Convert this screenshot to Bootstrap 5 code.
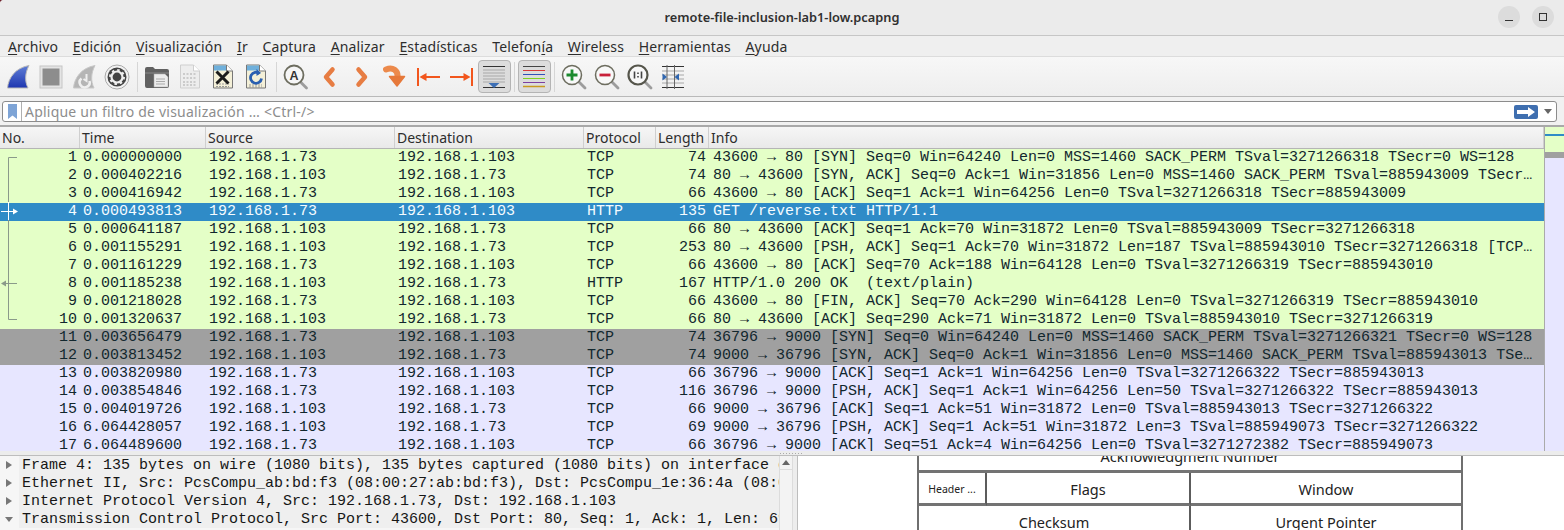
<!DOCTYPE html>
<html lang="es">
<head>
    <meta charset="UTF-8">
    <meta name="viewport" content="width=device-width, initial-scale=1.0">
    <title>remote-file-inclusion-lab1-low.pcapng</title>
    <link href="https://cdn.jsdelivr.net/npm/bootstrap@5.3.0/dist/css/bootstrap.min.css" rel="stylesheet">
    <style>
        html, body { height: 530px; overflow: hidden; }
        body { background: #6e1f2a; font-family: "Noto Sans", sans-serif; font-size: 14px; line-height: 18px; color: #2f2f2f; }
        .app-shell { height: 530px; background: #f0f0f0; border-top-left-radius: 4px; }

        .title-strip { height: 36px; background: #ebebeb; border-bottom: 1px solid #c6c6c6; }
        .title-text { font-weight: 600; font-size: 12.8px; color: #303030; margin-bottom: 1px; }
        .win-btn { width: 22px; height: 22px; border-radius: 50%; background: #dcdcdc; }
        .win-btns { right: 10px; top: 6px; gap: 12px; }

        .menu-strip { height: 21px; gap: 14.7px; padding-left: 8px; padding-top: 2px; background: #efefef; border-bottom: 1px solid #dcdcdc; font-size: 14px; letter-spacing: .15px; color: #2d2d2d; }
        .menu-strip u { text-underline-offset: 2px; }

        .tool-strip { height: 40px; background: linear-gradient(#f7f7f7, #eeeeee); border-bottom: 1px solid #b9b9b9; padding-left: 1.5px; }
        .tool-btn { width: 33px; height: 33px; }
        .tool-btn.pressed { background: #dcdcdc; border: 1px solid #b4b4b4; border-radius: 4px; }
        .tool-sep { width: 7px; height: 30px; }
        .tool-sep::after { content: ""; display: block; width: 1px; height: 100%; margin: 0 auto; background: #d6d6d6; }

        .filter-strip { height: 30px; background: #f1f1f1; border-bottom: 2px solid #a9a9a9; padding: 4px 7px 3px 2px; }
        .filter-box { height: 21px; background: #fff; border: 1px solid #8c8c8c; border-radius: 3px; }
        .filter-mark { width: 19px; border-right: 1px solid #b0b0b0; }
        .filter-hint { color: #8d8d8d; font-size: 14px; letter-spacing: .22px; padding-left: 3px; }
        .filter-go { width: 24px; height: 14px; background: #3f6fb0; border-radius: 2px; margin-right: 6px; }
        .filter-caret { width: 0; height: 0; border: 4px solid transparent; border-top: 5px solid #666; border-bottom: 0; margin-right: 4px; }

        .packet-zone { height: 324px; }
        .packet-list { width: 1544px; }
        .pkt-table { width: 1544px; table-layout: fixed; border-collapse: collapse; }
        .pkt-table th { height: 21px; padding: 1px 2px 0; font-weight: 400; font-size: 14px; color: #2d2d2d; background: linear-gradient(#f6f6f6, #e9e9e9); box-shadow: inset -1px 0 #cfcfcf; border-bottom: 1px solid #b5b5b5; }
        .pkt-table td { height: 18px; padding: 0 3px; font-family: "Liberation Mono", monospace; font-size: 15px; line-height: 18px; white-space: pre; overflow: hidden; color: #12272e; }
        .pkt-table td.info-cell { padding-left: 4px; }
        .pkt-green td { background: #e4ffc7; }
        .pkt-gray td { background: #a0a0a0; }
        .pkt-blue td { background: #e7e6ff; }
        .pkt-sel td { background: #2f8bc7; color: #f4fbff; }
        .rel-marks { left: 0; top: 21px; }

        .map-strip { width: 20px; border-left: 1px solid #aaa; }
        .map-green { background: #e4ffc7; }
        .map-sel { height: 2px; background: #2f8bc7; }
        .map-gray { height: 6px; background: #a0a0a0; }
        .map-lav { background: #e7e6ff; }

        .split-grip { height: 5px; background: #ececec; border-bottom: 1px solid #bdbdbd; }
        .split-grip span { width: 1px; height: 1px; background: #aaa; }
        .split-dots { gap: 2px; padding-top: 2px; margin-left: 18px; }

        .lower-zone { height: 74px; }
        .tree-pane { width: 779px; background: #f6f6f6; }
        .tree-row { height: 18px; }
        .tree-arrow { width: 19px; }
        .tree-text { width: 760px; background: #efefef; font-family: "Liberation Mono", monospace; font-size: 15px; line-height: 18px; padding: 1px 0 0 3px; white-space: pre; overflow: hidden; color: #161616; }
        .arrow-right { width: 0; height: 0; border: 4px solid transparent; border-left: 6px solid #777; border-right: 0; margin-left: 6px; }
        .arrow-down { width: 0; height: 0; border: 4px solid transparent; border-top: 5px solid #777; border-bottom: 0; margin-left: 5px; }
        .tree-scroll { width: 14px; background: #f3f3f3; border-left: 1px solid #dcdcdc; border-right: 1px solid #dcdcdc; }
        .tree-scroll-btn { height: 14px; border-bottom: 1px solid #dcdcdc; }
        .arrow-up { width: 0; height: 0; border: 4px solid transparent; border-bottom: 5px solid #666; border-top: 0; }
        .pane-gap { width: 5px; background: #ededed; border-right: 1px solid #bdbdbd; }

        .diagram-pane { width: 766px; background: #fff; padding-left: 119px; }
        .tcp-grid { display: grid; grid-template-columns: 68px 204px 270px; grid-auto-rows: 33px; width: 546px; margin-top: -16px; border-left: 2px solid #6f6f6f; border-right: 2px solid #6f6f6f; color: #222; font-size: 14.5px; }
        .tcp-cell { border-bottom: 3px solid #737373; border-right: 2px solid #5c5c5c; padding-top: 2px; }
        .tcp-cell.last-cell { border-right: 0; }
        .tcp-span4 { grid-column: span 3; }
        .tcp-span2 { grid-column: span 2; }
        .tcp-tiny { font-size: 10.5px; }
    </style>
</head>
<body>
<div class="app-shell d-flex flex-column overflow-hidden">

    <!-- title bar -->
    <div class="title-strip position-relative d-flex align-items-center justify-content-center">
        <span class="title-text">remote-file-inclusion-lab1-low.pcapng</span>
        <div class="win-btns position-absolute d-flex">
            <div class="win-btn d-flex align-items-center justify-content-center">
                <svg width="10" height="10" viewBox="0 0 10 10"><rect x="1" y="8" width="8" height="1" fill="#333"/></svg>
            </div>
            <div class="win-btn d-flex align-items-center justify-content-center">
                <svg width="10" height="10" viewBox="0 0 10 10"><rect x="1.5" y="1.5" width="7" height="7" fill="none" stroke="#333"/></svg>
            </div>
        </div>
    </div>

    <!-- menu -->
    <nav class="menu-strip d-flex align-items-center">
        <span><u>A</u>rchivo</span>
        <span><u>E</u>dición</span>
        <span><u>V</u>isualización</span>
        <span><u>I</u>r</span>
        <span><u>C</u>aptura</span>
        <span><u>A</u>nalizar</span>
        <span><u>E</u>stadísticas</span>
        <span>Telefon<u>í</u>a</span>
        <span><u>W</u>ireless</span>
        <span><u>H</u>erramientas</span>
        <span><u>A</u>yuda</span>
    </nav>

    <!-- main toolbar -->
    <div class="tool-strip d-flex align-items-center">
        <div class="tool-btn d-flex align-items-center justify-content-center">
            <svg width="26" height="26" viewBox="0 0 26 26"><defs><linearGradient id="finBlue" x1="0" y1="0" x2="0" y2="1"><stop offset="0" stop-color="#5f7ed6"/><stop offset="1" stop-color="#1e36b0"/></linearGradient></defs><path d="M2.500 24C3.500 14 10 4 24 1.500C20 9 19.500 17 23 24Z" fill="url(#finBlue)" stroke="#b9b9b9"/></svg>
        </div>
        <div class="tool-btn d-flex align-items-center justify-content-center">
            <svg width="24" height="24" viewBox="0 0 24 24"><rect x="1" y="1" width="22" height="22" fill="#e4e4e4" stroke="#c6c6c6"/><rect x="3.500" y="3.500" width="17" height="17" fill="#8d8d8d"/></svg>
        </div>
        <div class="tool-btn d-flex align-items-center justify-content-center">
            <svg width="26" height="26" viewBox="0 0 26 26"><path d="M2.500 24C3.500 14 10 4 24 1.500C20 9 19.500 17 23 24Z" fill="#b5b5b5" stroke="#c8c8c8"/><path d="M10.500 14.500a5 5 0 1 0 8 2.500" fill="none" stroke="#efefef" stroke-width="2.500"/><path d="M15.500 10v7l-3-2" fill="none" stroke="#efefef" stroke-width="2"/></svg>
        </div>
        <div class="tool-btn d-flex align-items-center justify-content-center">
            <svg width="26" height="26" viewBox="0 0 26 26"><circle cx="13" cy="13" r="12" fill="#f2f2f2" stroke="#a9a9a9"/><circle cx="13" cy="13" r="9.500" fill="#444"/><circle cx="13" cy="13" r="5.500" fill="none" stroke="#eee" stroke-width="2.200" /><circle cx="13" cy="13" r="7" fill="none" stroke="#eee" stroke-width="2" stroke-dasharray="2.500 3"/></svg>
        </div>
        <div class="tool-sep"></div>
        <div class="tool-btn d-flex align-items-center justify-content-center">
            <svg width="26" height="24" viewBox="0 0 26 24"><path d="M1 4q0-2 2-2h6l2 2h12q2 0 2 2v15q0 2-2 2H3q-2 0-2-2Z" fill="#616161"/><path d="M1 8h24" stroke="#8a8a8a"/><path d="M10 9h11l3 3v10H10Z" fill="#ececec" stroke="#aaa" stroke-width=".5"/><path d="M12 14h9M12 16.500h9M12 19h9" stroke="#aaa"/></svg>
        </div>
        <div class="tool-btn d-flex align-items-center justify-content-center">
            <svg width="22" height="25" viewBox="0 0 22 25"><path d="M1.500 1h13l6 6v17h-19Z" fill="#ededed" stroke="#cfcfcf"/><path d="M14.500 1v6h6" fill="#fff" stroke="#cfcfcf"/><path d="M4 10h13M4 14h13M4 18h13M4 21h13" stroke="#c0c0c0" stroke-width="1.500" stroke-dasharray="2 1.500"/></svg>
        </div>
        <div class="tool-btn d-flex align-items-center justify-content-center">
            <svg width="22" height="25" viewBox="0 0 22 25"><path d="M1.500 1h13l6 6v17h-19Z" fill="#f4f0d8" stroke="#777"/><path d="M2 1.500h12l1 5H2Z" fill="#6fb0dc"/><path d="M14.500 1v6h6" fill="#fff" stroke="#777"/><path d="M4 20h13M4 22.500h13" stroke="#999" stroke-dasharray="2 1"/><path d="M4.500 7.500l12 12M16.500 7.500l-12 12" stroke="#1c1c1c" stroke-width="3"/></svg>
        </div>
        <div class="tool-btn d-flex align-items-center justify-content-center">
            <svg width="22" height="25" viewBox="0 0 22 25"><path d="M1.500 1h13l6 6v17h-19Z" fill="#f4f0d8" stroke="#777"/><path d="M2 1.500h12l1 5H2Z" fill="#6fb0dc"/><path d="M14.500 1v6h6" fill="#fff" stroke="#777"/><path d="M4 21h13M4 23h13" stroke="#999" stroke-dasharray="2 1"/><path d="M14.500 9.500a5.500 5.500 0 1 0 2 5" fill="none" stroke="#2a5fb0" stroke-width="2.800"/><path d="M11.500 5l4.500 4-4.500 3Z" fill="#2a5fb0"/></svg>
        </div>
        <div class="tool-sep"></div>
        <div class="tool-btn d-flex align-items-center justify-content-center">
            <svg width="26" height="26" viewBox="0 0 26 26"><path d="M16.500 17l7 7" stroke="#9c9c9c" stroke-width="2.800" stroke-linecap="round"/><circle cx="11" cy="11" r="9.500" fill="#f6f6f6" stroke="#6d6d5f" stroke-width="1.800"/><text x="11" y="15.500" text-anchor="middle" font-family="Liberation Sans, sans-serif" font-weight="700" font-size="12.500" fill="#333">A</text></svg>
        </div>
        <div class="tool-btn d-flex align-items-center justify-content-center">
            <svg width="16" height="22" viewBox="0 0 16 22"><path d="M11.500 3.500L5 11l6.500 7.500" fill="none" stroke="#e77d43" stroke-width="4.500" stroke-linecap="round" stroke-linejoin="round"/></svg>
        </div>
        <div class="tool-btn d-flex align-items-center justify-content-center">
            <svg width="16" height="22" viewBox="0 0 16 22"><path d="M4.500 3.500L11 11l-6.500 7.500" fill="none" stroke="#e77d43" stroke-width="4.500" stroke-linecap="round" stroke-linejoin="round"/></svg>
        </div>
        <div class="tool-btn d-flex align-items-center justify-content-center">
            <svg width="24" height="24" viewBox="0 0 24 24"><path d="M3 4.500C9.500 2 15.500 5 14.500 13" fill="none" stroke="#ec8a4c" stroke-width="6" stroke-linecap="round"/><path d="M6.500 11.500h15l-7.500 9.500Z" fill="#e6793a" stroke="#e6793a" stroke-width="1.500" stroke-linejoin="round"/></svg>
        </div>
        <div class="tool-btn d-flex align-items-center justify-content-center">
            <svg width="25" height="20" viewBox="0 0 25 20"><path d="M2 1v18" stroke="#f2561d" stroke-width="2"/><path d="M7 10h17" stroke="#f2561d" stroke-width="2"/><path d="M3.500 10l7-4v8Z" fill="#f2561d"/></svg>
        </div>
        <div class="tool-btn d-flex align-items-center justify-content-center">
            <svg width="25" height="20" viewBox="0 0 25 20"><path d="M23 1v18" stroke="#f2561d" stroke-width="2"/><path d="M1 10h17" stroke="#f2561d" stroke-width="2"/><path d="M21.500 10l-7-4v8Z" fill="#f2561d"/></svg>
        </div>
        <div class="tool-btn pressed d-flex align-items-center justify-content-center">
            <svg width="24" height="24" viewBox="0 0 24 24"><path d="M1 1.500h22M1 22.500h22" stroke="#333"/><path d="M1 5h22M1 8h22M1 11h22M1 14h22M1 17h22" stroke="#a8a8a8"/><path d="M6.500 18h11l-5.500 5Z" fill="#3d6fb5"/></svg>
        </div>
        <div class="tool-sep"></div>
        <div class="tool-btn pressed d-flex align-items-center justify-content-center">
            <svg width="24" height="24" viewBox="0 0 24 24"><path d="M1 1.500h22" stroke="#444"/><path d="M1 5.500h22" stroke="#d83a3a"/><path d="M1 9.500h22" stroke="#3250b8"/><path d="M1 13.500h22" stroke="#7fd020"/><path d="M1 17.500h22" stroke="#7b3fa0"/><path d="M1 21.500h22" stroke="#c99a1e" stroke-width="1.500"/></svg>
        </div>
        <div class="tool-sep"></div>
        <div class="tool-btn d-flex align-items-center justify-content-center">
            <svg width="26" height="26" viewBox="0 0 26 26"><path d="M17 17l7 7" stroke="#9c9c9c" stroke-width="2.800" stroke-linecap="round"/><circle cx="11" cy="11" r="9.500" fill="#f8f8f8" stroke="#6d6d5f" stroke-width="1.500"/><path d="M11 5.500v11M5.500 11h11" stroke="#1b8a2e" stroke-width="2.800"/></svg>
        </div>
        <div class="tool-btn d-flex align-items-center justify-content-center">
            <svg width="26" height="26" viewBox="0 0 26 26"><path d="M17 17l7 7" stroke="#9c9c9c" stroke-width="2.800" stroke-linecap="round"/><circle cx="11" cy="11" r="9.500" fill="#f8f8f8" stroke="#6d6d5f" stroke-width="1.500"/><path d="M5.500 11h11" stroke="#c8213a" stroke-width="2.800"/></svg>
        </div>
        <div class="tool-btn d-flex align-items-center justify-content-center">
            <svg width="26" height="26" viewBox="0 0 26 26"><path d="M17.500 17.500l6.500 6.500" stroke="#9c9c9c" stroke-width="2.800" stroke-linecap="round"/><circle cx="11" cy="11" r="9.500" fill="#f8f8f8" stroke="#55554b" stroke-width="2.200"/><path d="M7.500 7.500v7M14.500 7.500v7M11 8.500v1.500M11 12v1.500" stroke="#444" stroke-width="1.600"/></svg>
        </div>
        <div class="tool-btn d-flex align-items-center justify-content-center">
            <svg width="24" height="24" viewBox="0 0 24 24"><path d="M1 1.500h22M1 22.500h22" stroke="#333"/><path d="M1 6h22M1 10h22M1 14h22M1 18h22" stroke="#a8a8a8"/><path d="M6 0v24M13.500 0v24" stroke="#666"/><path d="M1.500 8.500L6 12l-4.500 3.500Z" fill="#2f66b0"/><path d="M18 8.500L13.500 12l4.500 3.500Z" fill="#2f66b0"/></svg>
        </div>
    </div>

    <!-- display filter -->
    <div class="filter-strip">
        <div class="filter-box d-flex align-items-center">
            <div class="filter-mark d-flex align-items-center justify-content-center h-100">
                <svg width="9" height="15" viewBox="0 0 9 15"><path d="M0 0h9v15l-4.500-3.500L0 15Z" fill="#7ea4d6"/></svg>
            </div>
            <div class="filter-hint flex-grow-1 text-nowrap">Aplique un filtro de visualización … &lt;Ctrl-/&gt;</div>
            <div class="filter-go d-flex align-items-center justify-content-center">
                <svg width="18" height="10" viewBox="0 0 18 10"><path d="M0 3h11V0l7 5-7 5V7H0Z" fill="#fff"/></svg>
            </div>
            <div class="filter-caret"></div>
        </div>
    </div>

    <!-- packet list -->
    <div class="packet-zone d-flex position-relative overflow-hidden">
        <div class="packet-list overflow-hidden position-relative">
            <table class="pkt-table">
                <colgroup><col style="width:80px"><col style="width:126px"><col style="width:189px"><col style="width:189px"><col style="width:72px"><col style="width:53px"><col></colgroup>
                <thead>
                    <tr><th>No.</th><th>Time</th><th>Source</th><th>Destination</th><th>Protocol</th><th>Length</th><th>Info</th></tr>
                </thead>
                <tbody>
                    <tr class="pkt-green"><td class="text-end">1</td><td>0.000000000</td><td>192.168.1.73</td><td>192.168.1.103</td><td>TCP</td><td class="text-end">74</td><td class="info-cell">43600 → 80 [SYN] Seq=0 Win=64240 Len=0 MSS=1460 SACK_PERM TSval=3271266318 TSecr=0 WS=128</td></tr>
                    <tr class="pkt-green"><td class="text-end">2</td><td>0.000402216</td><td>192.168.1.103</td><td>192.168.1.73</td><td>TCP</td><td class="text-end">74</td><td class="info-cell">80 → 43600 [SYN, ACK] Seq=0 Ack=1 Win=31856 Len=0 MSS=1460 SACK_PERM TSval=885943009 TSecr…</td></tr>
                    <tr class="pkt-green"><td class="text-end">3</td><td>0.000416942</td><td>192.168.1.73</td><td>192.168.1.103</td><td>TCP</td><td class="text-end">66</td><td class="info-cell">43600 → 80 [ACK] Seq=1 Ack=1 Win=64256 Len=0 TSval=3271266318 TSecr=885943009</td></tr>
                    <tr class="pkt-sel"><td class="text-end">4</td><td>0.000493813</td><td>192.168.1.73</td><td>192.168.1.103</td><td>HTTP</td><td class="text-end">135</td><td class="info-cell">GET /reverse.txt HTTP/1.1</td></tr>
                    <tr class="pkt-green"><td class="text-end">5</td><td>0.000641187</td><td>192.168.1.103</td><td>192.168.1.73</td><td>TCP</td><td class="text-end">66</td><td class="info-cell">80 → 43600 [ACK] Seq=1 Ack=70 Win=31872 Len=0 TSval=885943009 TSecr=3271266318</td></tr>
                    <tr class="pkt-green"><td class="text-end">6</td><td>0.001155291</td><td>192.168.1.103</td><td>192.168.1.73</td><td>TCP</td><td class="text-end">253</td><td class="info-cell">80 → 43600 [PSH, ACK] Seq=1 Ack=70 Win=31872 Len=187 TSval=885943010 TSecr=3271266318 [TCP…</td></tr>
                    <tr class="pkt-green"><td class="text-end">7</td><td>0.001161229</td><td>192.168.1.73</td><td>192.168.1.103</td><td>TCP</td><td class="text-end">66</td><td class="info-cell">43600 → 80 [ACK] Seq=70 Ack=188 Win=64128 Len=0 TSval=3271266319 TSecr=885943010</td></tr>
                    <tr class="pkt-green"><td class="text-end">8</td><td>0.001185238</td><td>192.168.1.103</td><td>192.168.1.73</td><td>HTTP</td><td class="text-end">167</td><td class="info-cell">HTTP/1.0 200 OK  (text/plain)</td></tr>
                    <tr class="pkt-green"><td class="text-end">9</td><td>0.001218028</td><td>192.168.1.73</td><td>192.168.1.103</td><td>TCP</td><td class="text-end">66</td><td class="info-cell">43600 → 80 [FIN, ACK] Seq=70 Ack=290 Win=64128 Len=0 TSval=3271266319 TSecr=885943010</td></tr>
                    <tr class="pkt-green"><td class="text-end">10</td><td>0.001320637</td><td>192.168.1.103</td><td>192.168.1.73</td><td>TCP</td><td class="text-end">66</td><td class="info-cell">80 → 43600 [ACK] Seq=290 Ack=71 Win=31872 Len=0 TSval=885943010 TSecr=3271266319</td></tr>
                    <tr class="pkt-gray"><td class="text-end">11</td><td>0.003656479</td><td>192.168.1.73</td><td>192.168.1.103</td><td>TCP</td><td class="text-end">74</td><td class="info-cell">36796 → 9000 [SYN] Seq=0 Win=64240 Len=0 MSS=1460 SACK_PERM TSval=3271266321 TSecr=0 WS=128</td></tr>
                    <tr class="pkt-gray"><td class="text-end">12</td><td>0.003813452</td><td>192.168.1.103</td><td>192.168.1.73</td><td>TCP</td><td class="text-end">74</td><td class="info-cell">9000 → 36796 [SYN, ACK] Seq=0 Ack=1 Win=31856 Len=0 MSS=1460 SACK_PERM TSval=885943013 TSe…</td></tr>
                    <tr class="pkt-blue"><td class="text-end">13</td><td>0.003820980</td><td>192.168.1.73</td><td>192.168.1.103</td><td>TCP</td><td class="text-end">66</td><td class="info-cell">36796 → 9000 [ACK] Seq=1 Ack=1 Win=64256 Len=0 TSval=3271266322 TSecr=885943013</td></tr>
                    <tr class="pkt-blue"><td class="text-end">14</td><td>0.003854846</td><td>192.168.1.73</td><td>192.168.1.103</td><td>TCP</td><td class="text-end">116</td><td class="info-cell">36796 → 9000 [PSH, ACK] Seq=1 Ack=1 Win=64256 Len=50 TSval=3271266322 TSecr=885943013</td></tr>
                    <tr class="pkt-blue"><td class="text-end">15</td><td>0.004019726</td><td>192.168.1.103</td><td>192.168.1.73</td><td>TCP</td><td class="text-end">66</td><td class="info-cell">9000 → 36796 [ACK] Seq=1 Ack=51 Win=31872 Len=0 TSval=885943013 TSecr=3271266322</td></tr>
                    <tr class="pkt-blue"><td class="text-end">16</td><td>6.064428057</td><td>192.168.1.103</td><td>192.168.1.73</td><td>TCP</td><td class="text-end">69</td><td class="info-cell">9000 → 36796 [PSH, ACK] Seq=1 Ack=51 Win=31872 Len=3 TSval=885949073 TSecr=3271266322</td></tr>
                    <tr class="pkt-blue"><td class="text-end">17</td><td>6.064489600</td><td>192.168.1.73</td><td>192.168.1.103</td><td>TCP</td><td class="text-end">66</td><td class="info-cell">36796 → 9000 [ACK] Seq=51 Ack=4 Win=64256 Len=0 TSval=3271272382 TSecr=885949073</td></tr>
                </tbody>
            </table>
            <!-- related packet marks, drawn over the No. column -->
            <svg class="rel-marks position-absolute" width="20" height="180" viewBox="0 0 20 180">
                <path d="M17 9.500H8.500V54M8.500 72V171.500H17" fill="none" stroke="#8a9a8a"/>
                <path d="M8.500 54V72" stroke="#fff"/>
                <path d="M1 63.500H14" stroke="#fff"/><path d="M18 63.500l-5-3v6Z" fill="#fff"/>
                <path d="M5 135.500H17" stroke="#8a9a8a"/><path d="M1 135.500l5-3v6Z" fill="#8a9a8a"/>
            </svg>
        </div>
        <div class="map-strip d-flex flex-column">
            <div class="map-green" style="height:7px"></div>
            <div class="map-sel"></div>
            <div class="map-green" style="height:16px"></div>
            <div class="map-gray"></div>
            <div class="map-lav flex-grow-1"></div>
        </div>
    </div>

    <!-- pane splitter -->
    <div class="split-grip d-flex justify-content-center">
        <div class="split-dots d-flex">
            <span></span><span></span><span></span><span></span><span></span><span></span><span></span><span></span>
        </div>
    </div>

    <!-- packet details and diagram -->
    <div class="lower-zone d-flex overflow-hidden">
        <div class="tree-pane">
            <div class="tree-row d-flex"><div class="tree-arrow d-flex align-items-center"><div class="arrow-right"></div></div><div class="tree-text">Frame 4: 135 bytes on wire (1080 bits), 135 bytes captured (1080 bits) on interface enp0s3</div></div>
            <div class="tree-row d-flex"><div class="tree-arrow d-flex align-items-center"><div class="arrow-right"></div></div><div class="tree-text">Ethernet II, Src: PcsCompu_ab:bd:f3 (08:00:27:ab:bd:f3), Dst: PcsCompu_1e:36:4a (08:00:27:1e:36:4a)</div></div>
            <div class="tree-row d-flex"><div class="tree-arrow d-flex align-items-center"><div class="arrow-right"></div></div><div class="tree-text">Internet Protocol Version 4, Src: 192.168.1.73, Dst: 192.168.1.103</div></div>
            <div class="tree-row d-flex"><div class="tree-arrow d-flex align-items-center"><div class="arrow-down"></div></div><div class="tree-text">Transmission Control Protocol, Src Port: 43600, Dst Port: 80, Seq: 1, Ack: 1, Len: 69</div></div>
        </div>
        <div class="tree-scroll">
            <div class="tree-scroll-btn d-flex align-items-center justify-content-center"><div class="arrow-up"></div></div>
        </div>
        <div class="pane-gap"></div>
        <div class="diagram-pane overflow-hidden">
            <div class="tcp-grid text-center">
                <div class="tcp-cell last-cell tcp-span4 d-flex align-items-center justify-content-center">Acknowledgment Number</div>
                <div class="tcp-cell tcp-tiny d-flex align-items-center justify-content-center">Header ...</div>
                <div class="tcp-cell d-flex align-items-center justify-content-center">Flags</div>
                <div class="tcp-cell last-cell d-flex align-items-center justify-content-center">Window</div>
                <div class="tcp-cell tcp-span2 d-flex align-items-center justify-content-center">Checksum</div>
                <div class="tcp-cell last-cell d-flex align-items-center justify-content-center">Urgent Pointer</div>
            </div>
        </div>
    </div>
</div>
<script src="https://cdn.jsdelivr.net/npm/bootstrap@5.3.0/dist/js/bootstrap.bundle.min.js"></script>
</body>
</html>
